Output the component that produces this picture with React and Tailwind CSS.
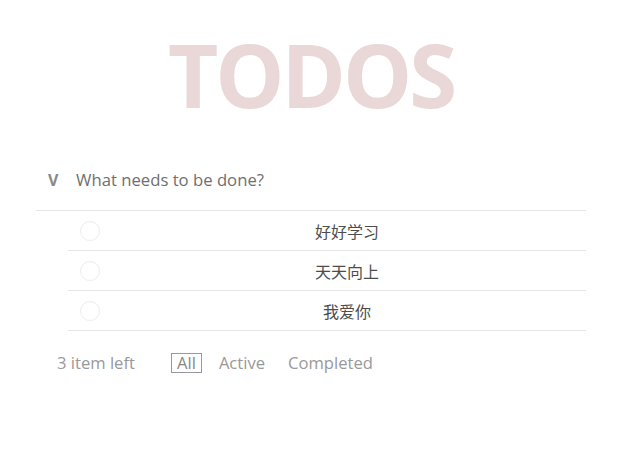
import React from "react";

const todos = ["好好学习", "天天向上", "我爱你"];

export default function App() {
  return (
    <div
      className="min-h-screen bg-white"
      style={{ fontFamily: '"Open Sans", "Noto Sans CJK SC", sans-serif' }}
    >
      <div className="ml-[36px] w-[550px]">
        <h1 className="pt-[22px] h-[150px] text-center text-[87px] font-bold leading-[1.2] tracking-[-3px] text-[#ead7d7]">
          TODOS
        </h1>

        <div className="flex items-center h-[61px] border-b border-[#e6e6e6]">
          <span className="w-[40px] pl-[12px] text-[16px] font-bold text-[#8a8a8a]">V</span>
          <span className="text-[16.7px] text-[#6f6f6f]">What needs to be done?</span>
        </div>

        <ul className="ml-[32px]">
          {todos.map((t) => (
            <li key={t} className="flex items-center h-[40px] border-b border-[#e6e6e6]">
              <span className="ml-[12px] w-[20px] h-[20px] rounded-full border border-[#ededed]" />
              <span className="flex-1 pl-[8px] pt-[2px] text-center text-[16px] text-[#4d4d4d]">{t}</span>
            </li>
          ))}
        </ul>

        <div className="flex items-center mt-[20px] text-[16.6px] text-[#999]">
          <span className="ml-[21px] w-[114px]">3 item left</span>
          <span className="px-[5px] leading-[18px] border border-[#999] text-[#888]">All</span>
          <span className="ml-[17px]">Active</span>
          <span className="ml-[23px]">Completed</span>
        </div>
      </div>
    </div>
  );
}
